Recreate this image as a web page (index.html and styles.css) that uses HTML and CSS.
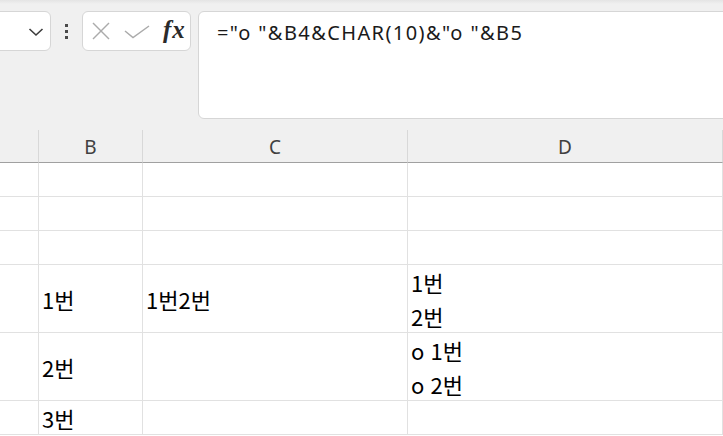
FILE: index.html
```html
<!DOCTYPE html>
<html lang="ko">
<head>
    <meta charset="UTF-8">
    <meta name="viewport" content="width=device-width, initial-scale=1.0">
    <title>Sheet</title>
    <link rel="stylesheet" href="styles.css">
</head>
<body>
    <div class="topbar">
        <div class="name-box">
            <svg class="chevron" width="16" height="10" viewBox="0 0 16 10">
                <polyline points="1.5,2 8,8 14.5,2" fill="none" stroke="#3c3c3c" stroke-width="1.6"/>
            </svg>
        </div>
        <div class="more-dots">
            <span></span><span></span><span></span>
        </div>
        <div class="fx-box">
            <svg width="18" height="18" viewBox="0 0 18 18">
                <line x1="1" y1="1" x2="17" y2="17" stroke="#ababab" stroke-width="1.5"/>
                <line x1="17" y1="1" x2="1" y2="17" stroke="#ababab" stroke-width="1.5"/>
            </svg>
            <svg width="26" height="14" viewBox="0 0 26 14">
                <polyline points="1,6 9,12.5 25,1" fill="none" stroke="#ababab" stroke-width="1.5"/>
            </svg>
            <span class="fx">fx</span>
        </div>
        <div class="formula-box">=&quot;o &quot;&amp;B4&amp;CHAR(10)&amp;&quot;o &quot;&amp;B5</div>
    </div>

    <div class="sheet">
        <div class="col-head"></div>
        <div class="col-head">B</div>
        <div class="col-head">C</div>
        <div class="col-head">D</div>

        <div class="cell"></div><div class="cell"></div><div class="cell"></div><div class="cell"></div>
        <div class="cell"></div><div class="cell"></div><div class="cell"></div><div class="cell"></div>
        <div class="cell"></div><div class="cell"></div><div class="cell"></div><div class="cell"></div>

        <div class="cell"></div>
        <div class="cell">1번</div>
        <div class="cell">1번2번</div>
        <div class="cell wrap">1번<br>2번</div>

        <div class="cell"></div>
        <div class="cell">2번</div>
        <div class="cell"></div>
        <div class="cell wrap">o 1번<br>o 2번</div>

        <div class="cell"></div>
        <div class="cell">3번</div>
        <div class="cell"></div>
        <div class="cell"></div>
    </div>
</body>
</html>
```

FILE: styles.css
```css
* {
    margin: 0;
    padding: 0;
    box-sizing: border-box;
}

html, body {
    overflow: hidden;
}

body {
    width: 723px;
    height: 436px;
    background: #ffffff;
    font-family: 'Noto Sans', 'Open Sans', sans-serif;
}

.topbar {
    height: 130px;
    background: linear-gradient(#e4e4e4 0, #f0f0f0 4px);
    display: flex;
    align-items: flex-start;
    padding-top: 11px;
    overflow: hidden;
}

.name-box {
    width: 61px;
    height: 40px;
    margin-left: -10px;
    background: #ffffff;
    border: 1px solid #d6d6d6;
    border-radius: 6px;
    display: flex;
    align-items: center;
    justify-content: flex-end;
    padding-right: 6px;
}

.chevron {
    margin-top: 2px;
}

.more-dots {
    width: 31px;
    height: 40px;
    display: flex;
    flex-direction: column;
    align-items: center;
    justify-content: center;
    gap: 3px;
}

.more-dots span {
    width: 3px;
    height: 3px;
    background: #4a4a4a;
}

.fx-box {
    width: 109px;
    height: 40px;
    background: #ffffff;
    border: 1px solid #d6d6d6;
    border-radius: 6px;
    display: flex;
    align-items: center;
    padding-left: 9px;
    gap: 13px;
}

.fx-box svg + svg {
    margin-top: 1px;
    margin-left: 1px;
}

.fx {
    font-family: 'Liberation Serif', 'DejaVu Serif', serif;
    font-style: italic;
    font-weight: bold;
    font-size: 25px;
    color: #2a2a2a;
    margin-top: -3px;
    letter-spacing: 1px;
}

.formula-box {
    flex: 1;
    height: 108px;
    margin-left: 7px;
    margin-right: -10px;
    background: #ffffff;
    border: 1px solid #d6d6d6;
    border-radius: 6px;
    padding: 7px 0 0 18px;
    font-size: 20px;
    letter-spacing: 1.4px;
    color: #1a1a1a;
    white-space: nowrap;
}

.sheet {
    display: grid;
    grid-template-columns: 39px 104px 265px 1fr;
    grid-template-rows: 33px 34px 34px 34px 68px 68px 34px;
    font-family: 'Noto Sans CJK KR', 'Noto Sans', sans-serif;
}

.col-head {
    background: #f0f0f0;
    border-right: 1px solid #d8d8d8;
    border-bottom: 1px solid #a0a0a0;
    display: flex;
    align-items: center;
    justify-content: center;
    font-family: 'Noto Sans', 'Open Sans', sans-serif;
    font-size: 19px;
    color: #404040;
    padding-top: 1px;
}

.cell {
    border-right: 1px solid #e1e1e1;
    border-bottom: 1px solid #e1e1e1;
    display: flex;
    align-items: center;
    padding-left: 3px;
    font-size: 22px;
    color: #000000;
    line-height: 34px;
}

.wrap {
    align-items: flex-start;
}
```
